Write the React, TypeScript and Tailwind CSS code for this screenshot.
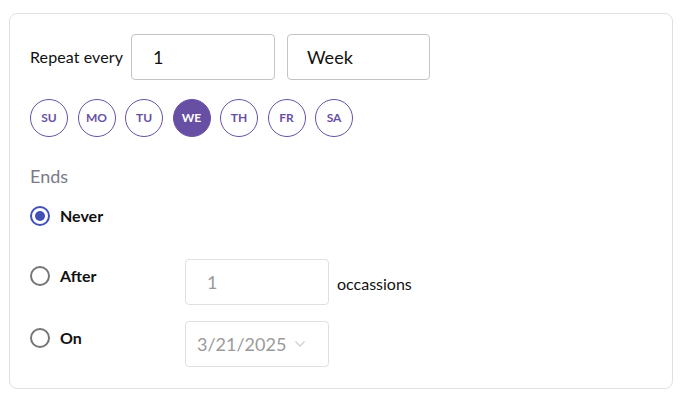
import React from 'react';

const days = ['SU', 'MO', 'TU', 'WE', 'TH', 'FR', 'SA'];

const Radio = ({ checked }: { checked?: boolean }) => (
  <span
    className={
      'flex h-[20px] w-[20px] shrink-0 items-center justify-center rounded-full border-2 ' +
      (checked ? 'border-[#3f51b5]' : 'border-[#757575]')
    }
  >
    {checked && <span className="h-[10px] w-[10px] rounded-full bg-[#3f51b5]" />}
  </span>
);

export default function App() {
  return (
    <div className="bg-white pt-[13px] pl-[9px]" style={{ fontFamily: 'Lato, "Noto Sans", sans-serif' }}>
      <div className="h-[376px] w-[664px] rounded-lg border border-[#e0e0e0] pl-[20px] pt-[20px]">
        <div className="flex items-center">
          <span className="w-[101px] text-[16px] tracking-[0.1px] text-[#111]">Repeat every</span>
          <div className="flex h-[46px] w-[144px] items-center rounded-[4px] border border-[#c4c4c4] pl-[21px] text-[18px] text-[#111]">
            1
          </div>
          <div className="ml-[12px] flex h-[46px] w-[143px] items-center rounded-[4px] border border-[#c4c4c4] pl-[19px] text-[18px] text-[#111]">
            Week
          </div>
        </div>

        <div className="mt-[19px] flex gap-[9.5px]">
          {days.map((d) => (
            <div
              key={d}
              className={
                'flex h-[38px] w-[38px] items-center justify-center rounded-full border-[1.5px] text-[12px] font-bold ' +
                (d === 'WE'
                  ? 'border-[#6750a4] bg-[#6750a4] text-white'
                  : 'border-[#6750a4] text-[#6750a4]')
              }
            >
              {d}
            </div>
          ))}
        </div>

        <div className="mt-[27px] text-[18px] leading-[24px] text-[#7b7b86]">Ends</div>

        <div className="mt-[16px] flex items-center">
          <Radio checked />
          <span className="ml-[10px] text-[16px] font-bold text-[#111]">Never</span>
        </div>

        <div className="mt-[31px] flex">
          <div className="flex w-[155px] items-center self-start pt-[5px]">
            <Radio />
            <span className="ml-[10px] text-[16px] font-bold text-[#111]">After</span>
          </div>
          <div className="flex h-[46px] w-[144px] items-center rounded-[4px] border border-[#e0e0e0] pl-[21px] text-[18px] text-[#9a9a9a]">
            1
          </div>
          <span className="ml-[8px] self-center pt-[4px] text-[16px] text-[#111]">occassions</span>
        </div>

        <div className="mt-[16px] flex">
          <div className="flex w-[155px] items-center self-start pt-[5px]">
            <Radio />
            <span className="ml-[10px] text-[16px] font-bold text-[#111]">On</span>
          </div>
          <div className="flex h-[46px] w-[144px] items-center rounded-[4px] border border-[#e0e0e0] pl-[11px] text-[18px] text-[#9a9a9a]">
            3/21/2025
            <svg className="ml-[8px]" width="12" height="8" viewBox="0 0 12 8" fill="none">
              <path d="M1.5 1.5 L6 6 L10.5 1.5" stroke="#d6d6dc" strokeWidth="1.6" />
            </svg>
          </div>
        </div>
      </div>
    </div>
  );
}
